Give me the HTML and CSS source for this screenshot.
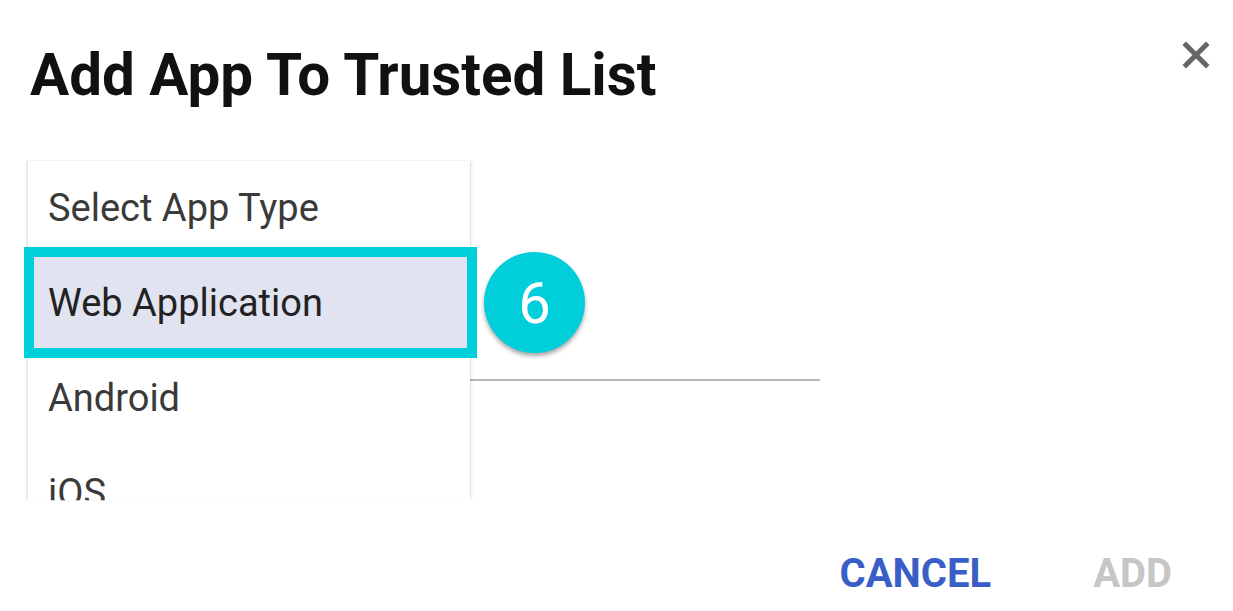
FILE: index.html
```html
<!DOCTYPE html>
<html lang="en">
<head>
<meta charset="utf-8">
<title>Add App To Trusted List</title>
<link rel="stylesheet" href="styles.css">
</head>
<body>
<div class="dialog">
  <div class="header">
    <h1 class="title">Add App To Trusted List</h1>
    <button class="close" aria-label="Close">
      <svg width="28" height="28" viewBox="0 0 28 28"><path d="M4 4 L24 24 M24 4 L4 24" stroke="#666" stroke-width="5" stroke-linecap="square"/></svg>
    </button>
  </div>
  <div class="content">
    <div class="field"></div>
    <ul class="menu">
      <li class="item">Select App Type</li>
      <li class="item selected">Web Application</li>
      <li class="item">Android</li>
      <li class="item">iOS</li>
    </ul>
    <div class="badge">6</div>
  </div>
  <div class="actions">
    <button class="btn cancel">CANCEL</button>
    <button class="btn add">ADD</button>
  </div>
</div>
</body>
</html>
```
FILE: styles.css
```css
html, body {
  margin: 0;
  padding: 0;
  background: #fff;
}
body {
  font-family: Roboto, "Liberation Sans", sans-serif;
  width: 1233px;
  height: 611px;
  overflow: hidden;
}
.dialog {
  display: flex;
  flex-direction: column;
}
.header {
  display: flex;
  justify-content: space-between;
  align-items: flex-start;
  padding: 0 23px 0 30px;
}
.title {
  margin: 46px 0 0 0;
  font-size: 58.3px;
  line-height: 1;
  font-weight: 700;
  color: #111;
}
.close {
  margin-top: 41px;
  padding: 0;
  border: 0;
  background: none;
  width: 28px;
  height: 28px;
  display: block;
}
.close svg { display: block; }
.content {
  position: relative;
  margin-top: 56px;
  height: 340px;
}
.field {
  margin-left: 28px;
  width: 792px;
  height: 219px;
  border-bottom: 2px solid #b8b8b8;
}
.menu {
  position: absolute;
  left: 28px;
  top: 0;
  width: 442px;
  height: 340px;
  margin: 0;
  padding: 0;
  list-style: none;
  background: #fff;
  box-shadow: 0 0 4px rgba(0,0,0,0.2), 0 0 1px rgba(0,0,0,0.15);
  clip-path: inset(0 -10px 0 -10px);
}
.item {
  position: relative;
  height: 95px;
  display: flex;
  align-items: center;
  padding-left: 20px;
  font-size: 38px;
  color: #3a3a3a;
}
.item.selected {
  background: #e1e3f0;
  color: #222;
}
.item.selected::after {
  content: "";
  position: absolute;
  left: -4px;
  right: -7px;
  top: -8px;
  bottom: -8px;
  border: 10px solid #00d0db;
}
.badge {
  position: absolute;
  left: 484px;
  top: 92px;
  width: 101px;
  height: 101px;
  border-radius: 50%;
  background: #00cfdb;
  color: #fff;
  font-size: 58px;
  display: flex;
  align-items: center;
  justify-content: center;
  box-shadow: 0 3px 4px rgba(0,0,0,0.35);
}
.actions {
  display: flex;
  justify-content: flex-end;
  gap: 102px;
  padding-right: 61px;
  margin-top: 54px;
}
.btn {
  border: 0;
  background: none;
  padding: 0;
  font-family: Roboto, "Liberation Sans", sans-serif;
  font-weight: 700;
  font-size: 40px;
  line-height: 1;
}
.cancel { color: #3a5ec8; }
.add { color: #c6c6c6; }
```
